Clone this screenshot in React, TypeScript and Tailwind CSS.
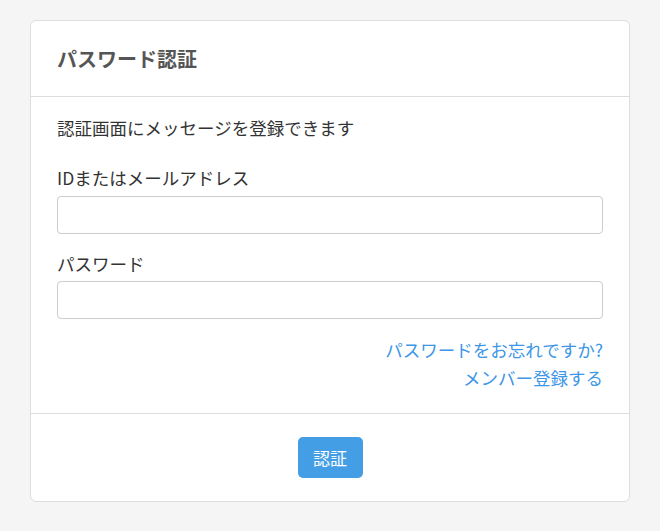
export default function App() {
  return (
    <main
      className="min-h-screen bg-[#f5f5f5] pt-5"
      style={{ fontFamily: '"Noto Sans CJK JP", "Noto Sans", sans-serif' }}
    >
      <div className="mx-auto w-[600px] rounded-md border border-[#dddddd] bg-white">
        {/* Header */}
        <div className="flex h-[76px] items-center border-b border-[#dddddd] px-[26px]">
          <h1 className="text-[20px] font-bold leading-7 text-[#555555]">パスワード認証</h1>
        </div>

        {/* Body */}
        <div className="px-[26px] pt-[17px] pb-[21px] text-[17.5px] leading-7 text-[#333333]">
          <p>認証画面にメッセージを登録できます</p>

          <label className="mt-[22px] block">IDまたはメールアドレス</label>
          <input
            type="text"
            className="mt-1 block h-[38px] w-full rounded border border-[#cccccc] px-3 outline-none"
          />

          <label className="mt-4 block">パスワード</label>
          <input
            type="password"
            className="mt-[3px] block h-[38px] w-full rounded border border-[#cccccc] px-3 outline-none"
          />

          <div className="mt-[17px] flex flex-col items-end text-[#3d96e6]">
            <a href="#">パスワードをお忘れですか?</a>
            <a href="#">メンバー登録する</a>
          </div>
        </div>

        {/* Footer */}
        <div className="flex justify-center border-t border-[#dddddd] pt-[23px] pb-[23px]">
          <button className="h-[41px] w-[65px] rounded-[5px] bg-[#449ee6] text-[17px] text-white">
            認証
          </button>
        </div>
      </div>
    </main>
  );
}
